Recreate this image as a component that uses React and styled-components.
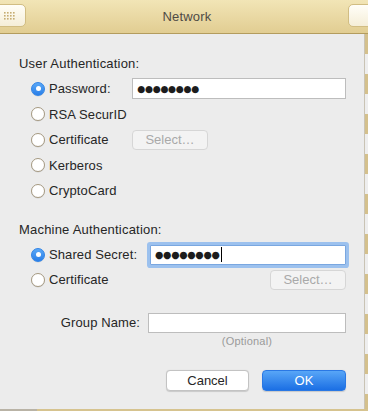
import React from 'react';
import styled, { createGlobalStyle } from 'styled-components';

const GlobalStyle = createGlobalStyle`
  html, body {
    margin: 0;
    padding: 0;
    background: #d9c899;
  }
  * {
    box-sizing: border-box;
  }
`;

const Frame = styled.div`
  width: 368px;
  height: 411px;
  overflow: hidden;
  display: flex;
  flex-direction: column;
  font-family: 'Liberation Sans', Arial, sans-serif;
  font-size: 13px;
  color: #262626;
  background: linear-gradient(90deg, #b9b3a6 0 37px, #d6c38f 37px);
`;

const TitleBar = styled.div`
  height: 34px;
  flex: none;
  display: flex;
  align-items: center;
  justify-content: space-between;
  background: linear-gradient(#f2e5b6, #e1cd92);
  border-bottom: 1px solid #b39c5e;
`;

const TitleText = styled.div`
  color: #4f4b45;
  font-size: 13px;
  letter-spacing: 0.2px;
`;

const BarButton = styled.div`
  width: ${p => p.$width}px;
  height: 23px;
  margin: ${p => (p.$side === 'left' ? '0 0 2px -6px' : '0 -8px 2px 0')};
  border: 1px solid #d1bd83;
  border-radius: 5px;
  background: linear-gradient(#fffef8, #f5eed8);
  display: flex;
  align-items: center;
  justify-content: flex-end;
  padding-right: 10px;
`;

const Body = styled.div`
  display: flex;
  height: 375px;
  flex: none;
`;

const Sheet = styled.div`
  flex: 1;
  background: #ececec;
  padding: 22px 18px 0 19px;
  display: flex;
  flex-direction: column;
`;

const Edge = styled.div`
  width: 4px;
  border-left: 1px solid #c9c3b4;
  background: repeating-linear-gradient(#d4c08c 0 20px, #eeeeee 20px 40px);
`;

const Heading = styled.div`
  line-height: 16px;
  letter-spacing: 0.2px;
  margin-top: ${p => p.$gap || 0}px;
`;

const Group = styled.div`
  margin-top: 4px;
  display: flex;
  flex-direction: column;
`;

const Row = styled.div`
  height: ${p => p.$h || 25}px;
  display: flex;
  align-items: center;
  padding-left: 12px;
`;

const Radio = styled.span`
  width: 14px;
  height: 14px;
  flex: none;
  border-radius: 50%;
  margin-right: 4px;
  display: flex;
  align-items: center;
  justify-content: center;
  border: 1px solid ${p => (p.$on ? '#2f83e6' : '#a69a82')};
  background: ${p => (p.$on ? 'linear-gradient(#5aa8f7, #2a7fe8)' : '#ffffff')};
  box-shadow: 0 0.5px 0.5px rgba(0, 0, 0, 0.12);

  &::after {
    content: '';
    display: ${p => (p.$on ? 'block' : 'none')};
    width: 5px;
    height: 5px;
    border-radius: 50%;
    background: #ffffff;
  }
`;

const Label = styled.span`
  width: ${p => (p.$w ? `${p.$w}px` : 'auto')};
  flex: none;
  white-space: nowrap;
  letter-spacing: 0.1px;
`;

const Field = styled.div`
  height: ${p => p.$h || 21}px;
  width: ${p => (p.$w ? `${p.$w}px` : 'auto')};
  flex: ${p => (p.$w ? 'none' : 1)};
  background: #ffffff;
  border: 1px solid ${p => (p.$focus ? '#7aa7e0' : '#bdbdbd')};
  box-shadow: ${p => (p.$focus ? '0 0 0 3px #9cc1ee' : 'none')};
  border-radius: ${p => (p.$focus ? '1px' : '0')};
  display: flex;
  align-items: center;
  padding-left: 4px;
`;

// masked password, as the field draws it
const Dots = styled.span`
  font-family: 'DejaVu Sans', sans-serif;
  font-size: ${p => (p.$big ? 9.6 : 9.2)}px;
  letter-spacing: -0.3px;
  color: #1c1c1c;
  line-height: 1;
`;

const Caret = styled.span`
  width: 1px;
  height: 15px;
  background: #000000;
  margin-left: 1px;
`;

const SelectButton = styled.button`
  width: 76px;
  height: 20px;
  margin-left: ${p => (p.$right ? 'auto' : '0')};
  padding: 0;
  font-family: inherit;
  font-size: 13px;
  color: #a9a9a9;
  background: #f3f3f3;
  border: 1px solid #d6d6d6;
  border-radius: 4px;
`;

const NameRow = styled.div`
  margin-top: 18px;
  height: 25px;
  display: flex;
  align-items: center;
  justify-content: flex-end;
`;

const NameLabel = styled.span`
  margin-right: 8px;
  letter-spacing: 0.1px;
`;

const Hint = styled.div`
  align-self: flex-end;
  width: 198px;
  text-align: center;
  font-size: 11px;
  line-height: 13px;
  color: #9a9a9a;
  letter-spacing: 0.2px;
`;

const Actions = styled.div`
  margin-top: 21px;
  height: 22px;
  display: flex;
  justify-content: flex-end;
  align-items: center;
  gap: 13px;
`;

const ActionButton = styled.button`
  width: ${p => p.$w}px;
  height: 21px;
  padding: 0;
  font-family: inherit;
  font-size: 13px;
  border-radius: 4px;
  color: ${p => (p.$primary ? '#ffffff' : '#262626')};
  background: ${p => (p.$primary ? 'linear-gradient(#58a6f7, #1b6fe4)' : '#ffffff')};
  border: 1px solid ${p => (p.$primary ? '#2a78e4' : '#c3c3c3')};
  box-shadow: 0 0.5px 1px rgba(0, 0, 0, 0.15);
`;

function GridIcon() {
  const dots = [];
  for (let r = 0; r < 3; r++) {
    for (let c = 0; c < 4; c++) {
      dots.push(<rect key={`${r}-${c}`} x={c * 3} y={r * 3} width="1.6" height="1.6" fill="#c6ad72" />);
    }
  }
  return (
    <svg width="11" height="8" viewBox="0 0 11 8">
      {dots}
    </svg>
  );
}

export default function App() {
  return (
    <Frame>
      <GlobalStyle />
      <TitleBar>
        <BarButton $side="left" $width={32}>
          <GridIcon />
        </BarButton>
        <TitleText>Network</TitleText>
        <BarButton $side="right" $width={28} />
      </TitleBar>
      <Body>
        <Sheet>
          <Heading>User Authentication:</Heading>
          <Group>
            <Row $h={25.5}>
              <Radio $on />
              <Label $w={83}>Password:</Label>
              <Field>
                <Dots>●●●●●●●●</Dots>
              </Field>
            </Row>
            <Row $h={25.5}>
              <Radio />
              <Label>RSA SecurID</Label>
            </Row>
            <Row $h={25.5}>
              <Radio />
              <Label $w={83}>Certificate</Label>
              <SelectButton disabled>Select…</SelectButton>
            </Row>
            <Row $h={25.5}>
              <Radio />
              <Label>Kerberos</Label>
            </Row>
            <Row $h={25.5}>
              <Radio />
              <Label>CryptoCard</Label>
            </Row>
          </Group>

          <Heading $gap={18.5}>Machine Authentication:</Heading>
          <Group>
            <Row>
              <Radio $on />
              <Label $w={101}>Shared Secret:</Label>
              <Field $focus $h={20}>
                <Dots $big>●●●●●●●●</Dots>
                <Caret />
              </Field>
            </Row>
            <Row>
              <Radio />
              <Label>Certificate</Label>
              <SelectButton $right disabled>
                Select…
              </SelectButton>
            </Row>
          </Group>

          <NameRow>
            <NameLabel>Group Name:</NameLabel>
            <Field $w={198} $h={20} />
          </NameRow>
          <Hint>(Optional)</Hint>

          <Actions>
            <ActionButton $w={83}>Cancel</ActionButton>
            <ActionButton $w={84} $primary>
              OK
            </ActionButton>
          </Actions>
        </Sheet>
        <Edge />
      </Body>
    </Frame>
  );
}
